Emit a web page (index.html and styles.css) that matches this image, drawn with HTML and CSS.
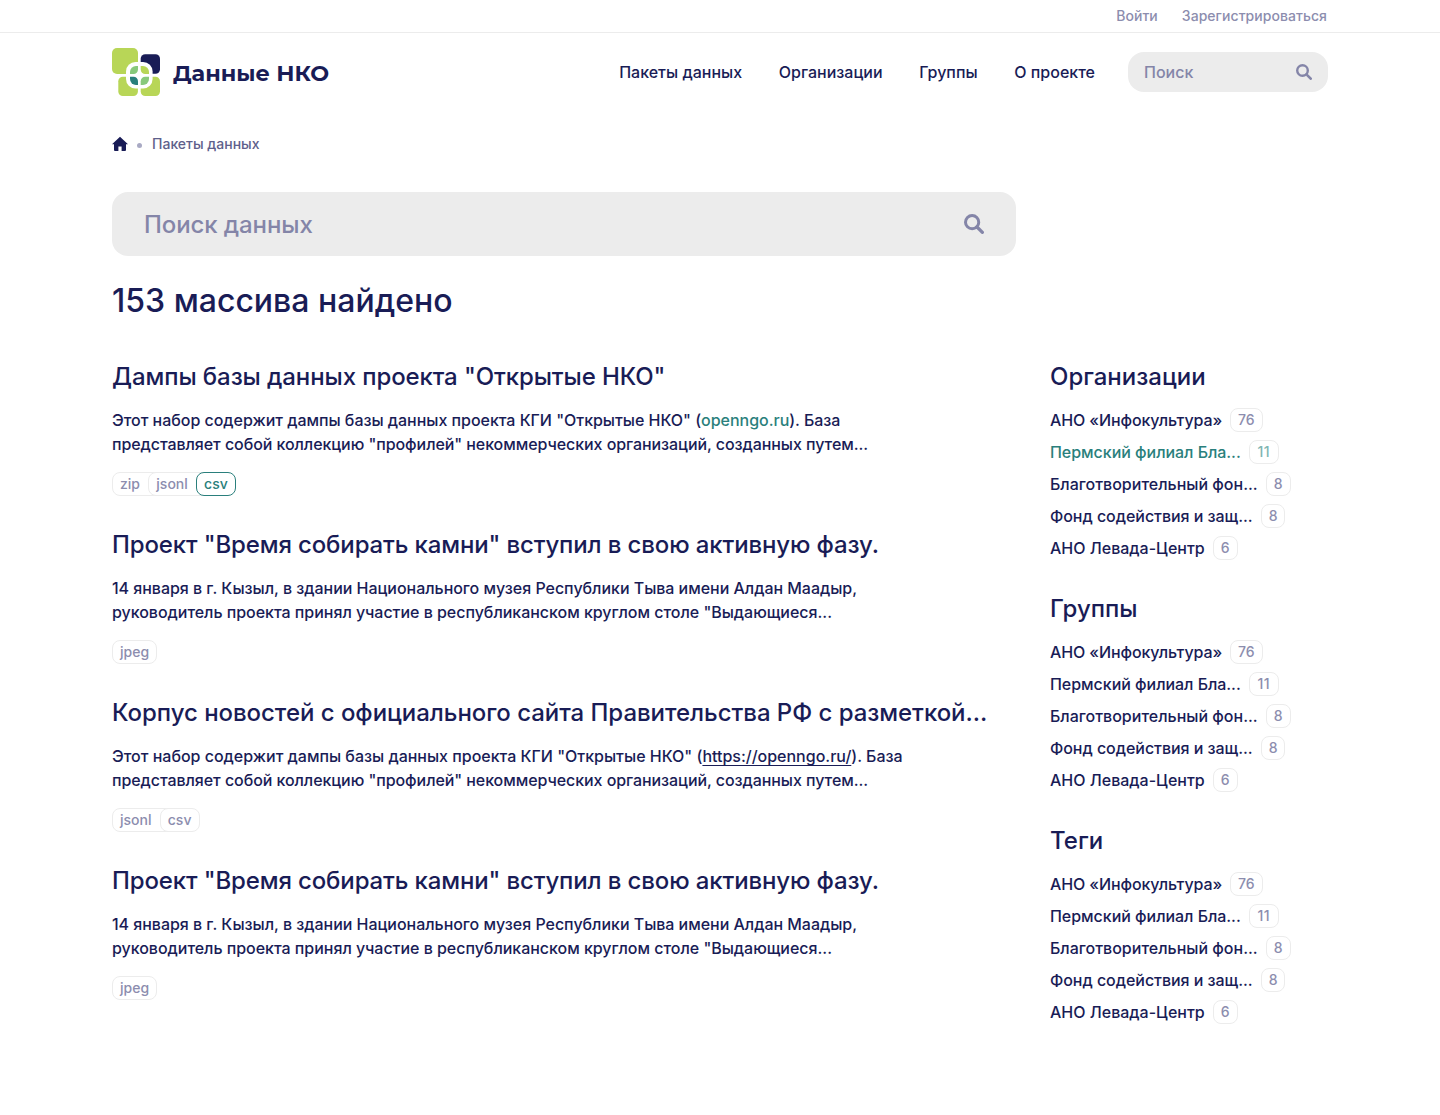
FILE: index.html
```html
<!DOCTYPE html>
<html lang="ru">
<head>
<meta charset="utf-8">
<title>Данные НКО</title>
<link rel="stylesheet" href="styles.css">
</head>
<body>
<svg class="sprite" aria-hidden="true">
  <symbol id="search" viewBox="0 0 16 16"><circle cx="6.5" cy="6.5" r="5.3" fill="none" stroke="currentColor" stroke-width="2.4"/><path d="M10.4 10.4L14.7 14.7" fill="none" stroke="currentColor" stroke-width="2.6" stroke-linecap="round"/></symbol>
</svg>
<div class="topbar">
  <div class="container topbar-inner"><a>Войти</a><a>Зарегистрироваться</a></div>
</div>
<header class="container header">
  <a class="logo">
    <svg width="48" height="48" viewBox="0 0 48 48">
      <g fill="#b8d657"><rect width="26" height="26" rx="5"/><rect x="6.3" y="28.7" width="19.6" height="19.3" rx="4.5"/><rect x="28.7" y="28.7" width="19.3" height="19.3" rx="4.5"/></g>
      <rect x="28.7" y="6.3" width="19.3" height="19.5" rx="4.5" fill="#191c56"/>
      <rect x="14" y="14" width="26.6" height="26.6" rx="9.5" fill="#fff"/>
      <path d="M26 18v3.500a4.500 4.500 0 0 1-4.500 4.500H18v-2a6 6 0 0 1 6-6z" fill="#88c97b"/>
      <path d="M28.700 18v3.500a4.500 4.500 0 0 0 4.500 4.500H37v-2a6 6 0 0 0-6-6z" fill="#b8d657"/>
      <path d="M26 37v-3.800a4.500 4.500 0 0 0-4.500-4.500H18v2.300a6 6 0 0 0 6 6z" fill="#2a7f7c"/>
      <path d="M28.700 37v-3.800a4.500 4.500 0 0 1 4.500-4.500H37v2.300a6 6 0 0 1-6 6z" fill="#88c97b"/>
    </svg>
    <span class="logo-text">Данные НКО</span>
  </a>
  <nav class="nav"><a>Пакеты данных</a><a>Организации</a><a>Группы</a><a>О проекте</a></nav>
  <div class="search-small"><span>Поиск</span><svg width="16" height="16"><use href="#search"/></svg></div>
</header>
<div class="container crumbs">
  <svg width="16" height="16" viewBox="0 0 16 16"><path d="M8 .7L16 8.200H14V14a1 1 0 0 1-1 1H9.600V10.600H6.400V15H3a1 1 0 0 1-1-1V8.200H0z" fill="#191c56"/></svg>
  <i class="dot"></i><span>Пакеты данных</span>
</div>
<div class="container">
  <div class="search-big"><span>Поиск данных</span><svg width="20" height="20"><use href="#search"/></svg></div>
  <h1>153 массива найдено</h1>
  <div class="columns">
    <main class="results">
      <article>
        <h2>Дампы базы данных проекта "Открытые НКО"</h2>
        <p>Этот набор содержит дампы базы данных проекта КГИ "Открытые НКО" (<a class="teal">openngo.ru</a>). База<br><span class="tight">представляет собой коллекцию "профилей" некоммерческих организаций, созданных путем...</span></p>
        <div class="tags"><span>zip</span><span>jsonl</span><span class="active">csv</span></div>
      </article>
      <article>
        <h2 class="narrow">Проект "Время собирать камни" вступил в свою активную фазу.</h2>
        <p>14 января в г. Кызыл, в здании Национального музея Республики Тыва имени Алдан Маадыр,<br>руководитель проекта принял участие в республиканском круглом столе "Выдающиеся...</p>
        <div class="tags"><span>jpeg</span></div>
      </article>
      <article>
        <h2 class="long">Корпус новостей с официального сайта Правительства РФ с разметкой...</h2>
        <p><span class="loose">Этот набор содержит дампы базы данных проекта КГИ "Открытые НКО" (<a class="underlined">https://openngo.ru/</a>). База</span><br><span class="tight">представляет собой коллекцию "профилей" некоммерческих организаций, созданных путем...</span></p>
        <div class="tags"><span>jsonl</span><span>csv</span></div>
      </article>
      <article>
        <h2 class="narrow">Проект "Время собирать камни" вступил в свою активную фазу.</h2>
        <p>14 января в г. Кызыл, в здании Национального музея Республики Тыва имени Алдан Маадыр,<br>руководитель проекта принял участие в республиканском круглом столе "Выдающиеся...</p>
        <div class="tags"><span>jpeg</span></div>
      </article>
    </main>
    <aside class="filters">
      <section>
        <h2>Организации</h2>
        <ul><li class="tight">АНО «Инфокультура»<b>76</b></li><li class="active snug">Пермский филиал Бла...<b class="double">11</b></li><li>Благотворительный фон...<b>8</b></li><li class="snug">Фонд содействия и защ...<b>8</b></li><li>АНО Левада-Центр<b>6</b></li></ul>
      </section>
      <section>
        <h2>Группы</h2>
        <ul><li class="tight">АНО «Инфокультура»<b>76</b></li><li class="snug">Пермский филиал Бла...<b class="double">11</b></li><li>Благотворительный фон...<b>8</b></li><li class="snug">Фонд содействия и защ...<b>8</b></li><li>АНО Левада-Центр<b>6</b></li></ul>
      </section>
      <section>
        <h2>Теги</h2>
        <ul><li class="tight">АНО «Инфокультура»<b>76</b></li><li class="snug">Пермский филиал Бла...<b class="double">11</b></li><li>Благотворительный фон...<b>8</b></li><li class="snug">Фонд содействия и защ...<b>8</b></li><li>АНО Левада-Центр<b>6</b></li></ul>
      </section>
    </aside>
  </div>
</div>
</body>
</html>
```
FILE: styles.css
```css
* { box-sizing: border-box; margin: 0; padding: 0; }
body { font: 500 16px/24px Inter, sans-serif; color: #191c56; background: #fff; white-space: nowrap; }
.sprite { display: none; }
svg { display: block; flex: none; }
.container { width: 1216px; margin: 0 auto; }
.topbar { height: 33px; border-bottom: 1px solid #ececec; }
.topbar-inner { display: flex; justify-content: flex-end; gap: 24px; height: 32px; padding-right: 1px; align-items: center; font-size: 14px; color: #8c8dae; letter-spacing: .05px; }
.header { display: flex; align-items: center; height: 78px; }
.logo { display: flex; align-items: center; gap: 13px; margin-right: auto; }
.logo-text { font-family: Montserrat, "Open Sans", sans-serif; font-size: 22.4px; font-weight: 700; padding-top: 1px; }
.nav { display: flex; gap: 36.7px; margin-right: 33px; }
.search-small { display: flex; align-items: center; justify-content: space-between; width: 200px; height: 40px; padding: 0 16px; border-radius: 16px; background: #ececec; color: #8485a8; }
.crumbs { display: flex; align-items: center; height: 24px; margin-top: 21px; font-size: 14px; color: #5e608b; }
.dot { width: 5px; height: 5px; border-radius: 50%; background: #a9aac4; margin: 2px 10px 0 9px; }
.search-big { display: flex; align-items: center; justify-content: space-between; width: 904px; height: 64px; margin-top: 36px; padding: 0 32px; border-radius: 16px; background: #ececec; color: #8485a8; font-size: 24px; letter-spacing: -.1px; }
.search-big span { padding-top: 2px; }
h1 { margin: 25px 0 39px; font-size: 32px; line-height: 40px; font-weight: 500; }
h2 { font-size: 24px; line-height: 32px; font-weight: 500; padding-top: 1px; margin-bottom: 15px; letter-spacing: -.1px; }
.narrow { letter-spacing: -.13px; }
.long { letter-spacing: -.04px; }
.columns { display: flex; }
.results { width: 938px; display: flex; flex-direction: column; gap: 32px; }
.results p { letter-spacing: -.03px; }
.tight { letter-spacing: -.07px; }
.loose { letter-spacing: -.01px; }
.snug { letter-spacing: -.04px; }
.filters .tight { letter-spacing: -.11px; }
.teal { color: #2a7f7c; }
.underlined { text-decoration: underline; text-underline-offset: 3px; text-decoration-thickness: 1px; }
.tags { display: flex; margin-top: 16px; }
.tags span { height: 24px; padding: 0 7px; border: 1px solid #ececec; border-radius: 8px; font-size: 14px; line-height: 22px; color: #8c8dae; background: #fff; }
.tags span:not(:last-child) { padding-right: 23.3px; }
.tags span + span { margin-left: -16px; }
.tags span + span:last-child { width: 40px; }
.tags .active { border-color: #2a7f7c; color: #2a7f7c; }
.filters { display: flex; flex-direction: column; gap: 32px; }
.filters h2 { letter-spacing: 0; }
.filters ul { list-style: none; display: flex; flex-direction: column; gap: 8px; }
.filters li { display: flex; gap: 8px; height: 24px; }
.filters b { font-weight: 500; font-size: 14px; line-height: 22px; padding: 0 7px; border: 1px solid #ececec; border-radius: 8px; color: #8c8dae; letter-spacing: 0; }
.filters .double { width: 30px; text-align: center; padding: 0; letter-spacing: .5px; }
.filters .active { color: #2a7f7c; }
.filters .active b { color: #80b5b2; }
```
